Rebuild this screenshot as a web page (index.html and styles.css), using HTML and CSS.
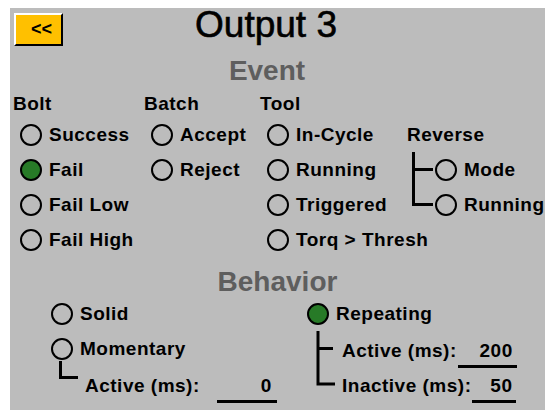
FILE: index.html
```html
<!DOCTYPE html>
<html lang="en">

<head>
    <meta charset="UTF-8">
    <meta name="viewport" content="width=device-width, initial-scale=1.0">
    <title>Output 3</title>
    <link rel="stylesheet" href="styles.css">
</head>

<body>
    <div class="screen">
        <!-- top bar -->
        <div class="top">
            <button class="back">&lt;&lt;</button>
            <h1 class="title">Output 3</h1>
        </div>

        <!-- event -->
        <h2 class="section event-title">Event</h2>
        <div class="event">
            <div class="col-head">Bolt</div>
            <div class="col-head">Batch</div>
            <div class="col-head">Tool</div>
            <div></div>

            <div class="opt"><span class="radio"></span>Success</div>
            <div class="opt"><span class="radio"></span>Accept</div>
            <div class="opt"><span class="radio"></span>In-Cycle</div>
            <div class="col-head">Reverse</div>

            <div class="opt"><span class="radio on"></span>Fail</div>
            <div class="opt"><span class="radio"></span>Reject</div>
            <div class="opt"><span class="radio"></span>Running</div>
            <div class="sub rev">
                <svg class="branch" width="21" height="35"><path d="M1.5 0V35M1.5 17.5H21" /></svg>
                <span class="radio"></span>Mode
            </div>

            <div class="opt"><span class="radio"></span>Fail Low</div>
            <div></div>
            <div class="opt"><span class="radio"></span>Triggered</div>
            <div class="sub rev">
                <svg class="branch" width="21" height="35"><path d="M1.5 0V17.5H21" /></svg>
                <span class="radio"></span>Running
            </div>

            <div class="opt"><span class="radio"></span>Fail High</div>
            <div></div>
            <div class="opt"><span class="radio"></span>Torq &gt; Thresh</div>
            <div></div>
        </div>

        <!-- behavior -->
        <h2 class="section">Behavior</h2>
        <div class="behavior">
            <div class="opt"><span class="radio"></span>Solid</div>
            <div class="opt"><span class="radio on"></span>Repeating</div>

            <div class="opt"><span class="radio"></span>Momentary</div>
            <div class="sub right">
                <svg class="branch" width="19" height="35"><path d="M2 0V35M2 17.5H17" /></svg>
                <span class="entry">Active (ms):<span class="field w200">200</span></span>
            </div>

            <div class="sub left">
                <svg class="branch" width="19" height="35"><path d="M1.5 -5V11.5H19" /></svg>
                <span class="entry">Active (ms):<span class="field w0">0</span></span>
            </div>
            <div class="sub right">
                <svg class="branch" width="19" height="35"><path d="M2 0V18H19" /></svg>
                <span class="entry">Inactive (ms):<span class="field w50">50</span></span>
            </div>
        </div>
    </div>
</body>

</html>
```

FILE: styles.css
```css
* {
    margin: 0;
    padding: 0;
    box-sizing: border-box;
}

html,
body {
    overflow: hidden;
}

body {
    background-color: #fff;
    font-family: "Liberation Sans", Arial, sans-serif;
}

.screen {
    margin: 8px 0 0 10px;
    height: 402px;
    background-color: #bcbcbc;
    color: #000;
}

/* top bar */
.top {
    display: flex;
    align-items: flex-start;
    height: 38px;
}

.back {
    width: 49px;
    height: 33px;
    margin: 5px 0 0 4px;
    padding-left: 6px;
    background-color: #ffc000;
    border: 2px solid;
    border-color: #fff #000 #000 #fff;
    font-family: "Liberation Sans", Arial, sans-serif;
    font-size: 18px;
    font-weight: bold;
    color: #000;
}

.title {
    flex: 1;
    padding-right: 76px;
    text-align: center;
    font-size: 37px;
    font-weight: normal;
    line-height: 33px;
    -webkit-text-stroke: 0.6px #000;
}

/* section titles */
.section {
    margin-top: 11px;
    text-align: center;
    font-size: 28px;
    font-weight: bold;
    line-height: 28px;
    color: #5e5e5e;
}

.event-title {
    padding-right: 21px;
}

/* labels */
.col-head,
.opt,
.sub {
    font-size: 19px;
    font-weight: bold;
    letter-spacing: 0.5px;
    white-space: nowrap;
}

.col-head {
    line-height: 26px;
}

.event .col-head {
    align-self: center;
}

.opt,
.sub {
    display: flex;
    align-items: center;
}

.opt {
    padding-left: 7px;
}

.radio {
    flex: none;
    width: 22px;
    height: 22px;
    margin-right: 7px;
    border: 2px solid #000;
    border-radius: 50%;
}

.radio.on {
    background-color: #277a27;
}

/* tree lines */
.branch {
    flex: none;
    overflow: visible;
}

.branch path {
    fill: none;
    stroke: #000;
    stroke-width: 3;
}

.rev .branch {
    margin-left: 5px;
    margin-right: 2px;
}

.left .branch {
    margin-left: 15px;
    margin-right: 7px;
}

.right .branch {
    margin-left: 16px;
    margin-right: 7px;
}

/* event grid */
.event {
    display: grid;
    grid-template-columns: 131px 116px 147px 1fr;
    grid-template-rows: 26px repeat(4, 35px);
    margin-top: 6px;
    padding-left: 3px;
}

/* behavior grid */
.behavior {
    display: grid;
    grid-template-columns: 256px 1fr;
    grid-template-rows: repeat(3, 35px);
    padding-left: 34px;
}

.entry {
    padding-top: 5px;
}

.field {
    display: inline-block;
    text-align: right;
    line-height: 20px;
    padding: 0 4px 4px 0;
    margin-bottom: -10px;
    border-bottom: 3px solid #000;
}

.w200 {
    width: 59px;
    margin-left: 1px;
}

.w50 {
    width: 44px;
    margin-left: 1px;
}

.w0 {
    width: 60px;
    margin-left: 17px;
    padding-right: 5px;
}
```
